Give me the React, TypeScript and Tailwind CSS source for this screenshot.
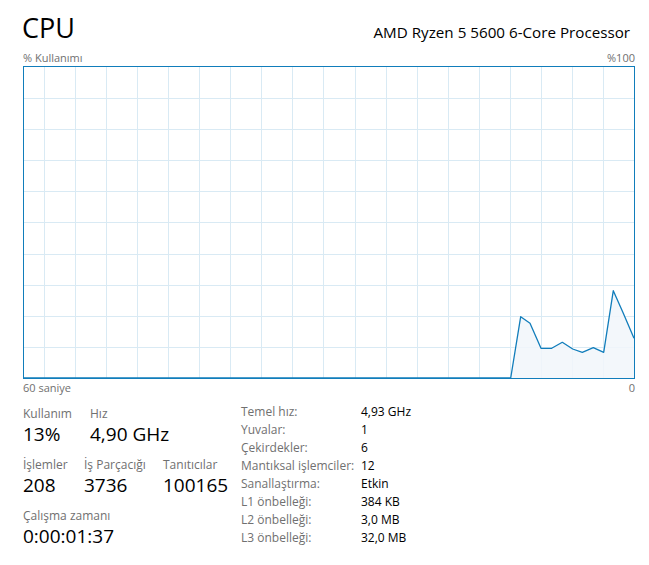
import React from "react";

const font = "font-['Segoe_UI','Open_Sans',sans-serif]";

// grafik noktaları (kutu içi koordinat)
const points: [number, number][] = [
  [0, 312],
  [487.7, 312],
  [497.7, 250.7],
  [507, 257.3],
  [518, 282.3],
  [528.7, 282.3],
  [539.3, 276.3],
  [549.7, 283],
  [559.3, 286.3],
  [570.3, 281.7],
  [580.7, 286.3],
  [590.3, 224.7],
  [600.3, 247.3],
  [611, 272.3],
];

const vLines = Array.from({ length: 19 }, (_, k) => Math.round(21 + 31.05 * k) + 0.5);
const hLines = [32, 63, 94, 125, 156, 188, 219, 250, 281].map((y) => y + 0.5);

function Graph() {
  const line = points.map((p) => p.join(",")).join(" ");
  const area = line + " 611,312";
  return (
    <svg width={612} height={313} viewBox="0 0 612 313" className="block">
      <rect x={0} y={0} width={612} height={313} fill="#ffffff" />
      {vLines.map((x) => (
        <line key={"v" + x} x1={x} y1={0} x2={x} y2={313} stroke="#d9eaf4" strokeWidth={1} />
      ))}
      {hLines.map((y) => (
        <line key={"h" + y} x1={0} y1={y} x2={612} y2={y} stroke="#d9eaf4" strokeWidth={1} />
      ))}
      <polygon points={area} fill="#f1f6fa" fillOpacity={0.85} />
      <polyline points={line} fill="none" stroke="#117dbb" strokeWidth={1.3} strokeLinejoin="round" />
      <rect x={0.5} y={0.5} width={611} height={312} fill="none" stroke="#117dbb" strokeWidth={1} />
    </svg>
  );
}

function Stat({ label, value, w }: { label: string; value: string; w?: string }) {
  return (
    <div className={w}>
      <div className="text-[12px] leading-[16px] text-[#707070]">{label}</div>
      <div className="text-[19px] leading-[24px] text-black">{value}</div>
    </div>
  );
}

const details = [
  ["Temel hız:", "4,93 GHz"],
  ["Yuvalar:", "1"],
  ["Çekirdekler:", "6"],
  ["Mantıksal işlemciler:", "12"],
  ["Sanallaştırma:", "Etkin"],
  ["L1 önbelleği:", "384 KB"],
  ["L2 önbelleği:", "3,0 MB"],
  ["L3 önbelleği:", "32,0 MB"],
];

export default function App() {
  return (
    <div className={`w-[649px] h-[565px] bg-white overflow-hidden ${font}`}>
      <div className="flex items-baseline justify-between pt-[10px] pl-[22px] pr-[19px]">
        <div className="text-[27px] leading-[36px] text-black">CPU</div>
        <div className="text-[15.2px] leading-[20px] text-black">AMD Ryzen 5 5600 6-Core Processor</div>
      </div>

      <div className="ml-[23px] w-[612px]">
        <div className="mt-[5px] flex justify-between text-[11px] leading-[14px] text-[#707070]">
          <span>% Kullanımı</span>
          <span>%100</span>
        </div>
        <div className="mt-[1px]">
          <Graph />
        </div>
        <div className="mt-[2px] flex justify-between text-[11px] leading-[14px] text-[#707070]">
          <span>60 saniye</span>
          <span>0</span>
        </div>
      </div>

      <div className="flex items-start mt-[6px]">
        <div className="ml-[23px] w-[218px] mt-[5px] flex flex-col gap-[11px]">
          <div className="flex">
            <Stat label="Kullanım" value="13%" w="w-[67px]" />
            <Stat label="Hız" value="4,90 GHz" />
          </div>
          <div className="flex">
            <Stat label="İşlemler" value="208" w="w-[61px]" />
            <Stat label="İş Parçacığı" value="3736" w="w-[79px]" />
            <Stat label="Tanıtıcılar" value="100165" />
          </div>
          <Stat label="Çalışma zamanı" value="0:00:01:37" />
        </div>

        <div className="mt-[2px] flex flex-col">
          {details.map(([k, v]) => (
            <div key={k} className="flex text-[12px] leading-[18px]">
              <span className="w-[120px] text-[#707070]">{k}</span>
              <span className="text-black">{v}</span>
            </div>
          ))}
        </div>
      </div>
    </div>
  );
}
